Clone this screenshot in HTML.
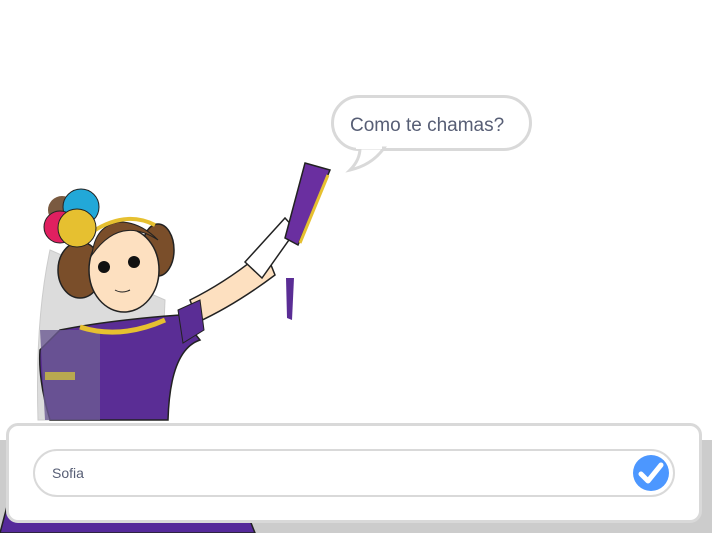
<!DOCTYPE html>
<html><head><style>
body{margin:0;width:712px;height:533px;overflow:hidden;background:#fff;position:relative;font-family:"Liberation Sans",sans-serif}
.gray{position:absolute;left:0;top:440px;width:712px;height:93px;background:#cccccc}
.box{position:absolute;left:6px;top:423px;width:690px;height:94px;background:#fff;border:3px solid #d9d9d9;border-radius:12px}
.inp{position:absolute;left:33px;top:449px;width:638px;height:44px;border:2px solid #d9d9d9;border-radius:24px;background:#fff}
.inp span{position:absolute;left:17px;top:14px;font-size:14px;color:#575e75}
.bub{position:absolute;left:331px;top:95px;width:201px;height:56px;border:3px solid #d9d9d9;border-radius:28px;background:#fff;box-sizing:border-box}
.bub span{position:absolute;left:16px;top:17px;font-size:19px;color:#575e75}
svg{position:absolute;left:0;top:0}
</style></head><body>
<div class="gray"></div>
<svg width="712" height="533">
<!-- lower dress visible below box -->
<path d="M0 533 L10 495 L240 495 L255 533 Z" fill="#55299a" stroke="#222" stroke-width="1.5"/>
<!-- veil -->
<path d="M50 250 Q35 320 38 420 L160 420 L165 300 Z" fill="#bbb" opacity="0.5" stroke="#999"/>
<!-- dress body -->
<path d="M60 330 Q110 320 180 315 L200 340 Q170 350 168 420 L50 420 Q38 380 40 350 Z" fill="#5a2d95" stroke="#222" stroke-width="1.5"/>
<path d="M40 330 L100 330 L100 420 L45 420 Z" fill="#6b5a92" opacity="0.8"/>
<path d="M45 372 L75 372 L75 380 L45 380 Z" fill="#b8a850"/>
<path d="M80 327 Q120 340 165 320" stroke="#e6c030" stroke-width="5" fill="none"/>
<!-- arm -->
<path d="M190 300 Q230 280 265 250 L275 275 Q235 305 198 322 Z" fill="#fde0c0" stroke="#222" stroke-width="1.5"/>
<path d="M245 262 L285 218 L296 230 L262 278 Z" fill="#fff" stroke="#222" stroke-width="1.5"/>
<path d="M178 310 L200 300 L204 330 L183 343 Z" fill="#5a2d95" stroke="#222"/>
<!-- scroll -->
<path d="M305 163 L330 170 L298 245 L285 238 Z" fill="#6a2fa0" stroke="#222" stroke-width="1.5"/>
<path d="M328 175 L300 243" stroke="#e6c030" stroke-width="3"/>
<path d="M286 278 L294 278 L292 320 L287 318 Z" fill="#5a2d95"/>
<!-- hair buns -->
<ellipse cx="80" cy="270" rx="22" ry="28" fill="#7a4e2a" stroke="#222" stroke-width="1.5"/>
<ellipse cx="158" cy="250" rx="16" ry="26" fill="#7a4e2a" stroke="#222" stroke-width="1.5"/>
<!-- face -->
<ellipse cx="124" cy="270" rx="35" ry="42" fill="#fde0c0" stroke="#222" stroke-width="1.5"/>
<path d="M92 255 Q120 215 158 240 Q140 222 120 222 Q95 225 92 255Z" fill="#7a4e2a" stroke="#222"/>
<path d="M92 232 Q125 210 155 225" stroke="#e6c030" stroke-width="4" fill="none"/>
<circle cx="104" cy="267" r="6" fill="#111"/><circle cx="134" cy="262" r="6" fill="#111"/>
<path d="M115 290 Q122 294 130 290" stroke="#222" fill="none"/>
<!-- flowers -->
<circle cx="62" cy="210" r="14" fill="#7a5a40"/>
<circle cx="81" cy="207" r="18" fill="#22a8d8" stroke="#222"/>
<circle cx="60" cy="227" r="16" fill="#e02060" stroke="#222"/>
<circle cx="77" cy="228" r="19" fill="#e6c030" stroke="#222"/>
</svg>
<div class="bub"><span>Como te chamas?</span></div>
<svg width="712" height="533" style="pointer-events:none">
<path d="M360 148 Q360 160 350 170 Q372 165 384 148 Z" fill="#fff" stroke="#d9d9d9" stroke-width="3"/>
<rect x="356" y="140" width="26" height="9" fill="#fff"/>
</svg>
<div class="box"></div>
<div class="inp"><span>Sofia</span></div>
<svg width="712" height="533">
<circle cx="651" cy="473" r="18" fill="#4c97ff"/>
<path d="M641 474 L648 481 L661 465" stroke="#fff" stroke-width="5" fill="none" stroke-linecap="round" stroke-linejoin="round"/>
</svg>
</body></html>
